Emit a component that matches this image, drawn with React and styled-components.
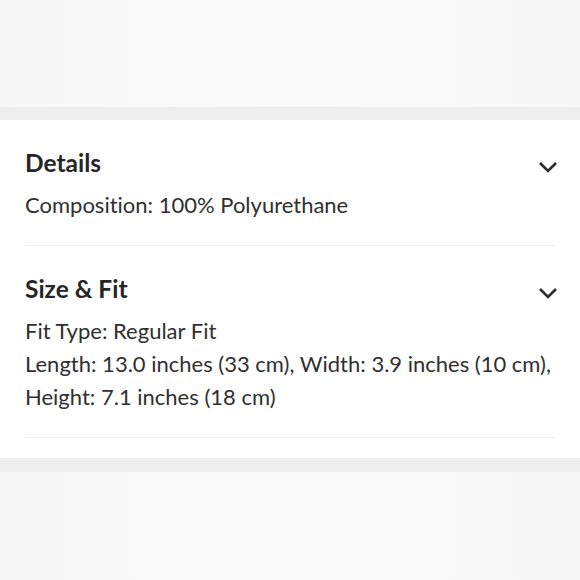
import React from 'react'
import styled, { createGlobalStyle } from 'styled-components'

const GlobalStyle = createGlobalStyle`
  html, body {
    margin: 0;
    padding: 0;
    background: #f8f8f8;
    font-family: Lato, "Open Sans", sans-serif;
    font-variant-ligatures: none;
  }
`;

const Chevron = () => (
  <svg width="20" height="12" viewBox="0 0 20 12" fill="none">
    <path d="M2 2 L10 10 L18 2" stroke="#2b2b2b" strokeWidth="2.6" strokeLinecap="butt" strokeLinejoin="miter" />
  </svg>
)

const sections = [
  { title: 'Details', lines: ['Composition: 100% Polyurethane'] },
  {
    title: 'Size & Fit',
    lines: [
      'Fit Type: Regular Fit',
      'Length: 13.0 inches (33 cm), Width: 3.9 inches (10 cm),',
      'Height: 7.1 inches (18 cm)',
    ],
  },
]

const App = () => {
  return (
    <Page>
      <GlobalStyle />
      <Backdrop />
      <Band />
      <Card>
        {sections.map((s) => (
          <Section key={s.title}>
            <Header>
              <Title>{s.title}</Title>
              <Toggle><Chevron /></Toggle>
            </Header>
            <Body>
              {s.lines.map((l) => <div key={l}>{l}</div>)}
            </Body>
          </Section>
        ))}
      </Card>
      <Band $h={14} />
      <Backdrop $grow />
    </Page>
  )
}

const Page = styled.div`
  display: flex;
  flex-direction: column;
  width: 580px;
  height: 580px;
  overflow: hidden;
`;

const Backdrop = styled.div`
  height: 107px;
  flex: ${(p) => (p.$grow ? 1 : 'none')};
  background: linear-gradient(90deg, #f7f7f7, #fafafa 50%, #f7f7f7);
`;

const Band = styled.div`
  height: ${(p) => p.$h || 13}px;
  flex: none;
  background: #eeeeee;
`;

const Card = styled.div`
  background: #fff;
  padding: 0 25px 20px;
`;

const Section = styled.div`
  padding: 28px 0 24px;
  border-bottom: 1px solid #ececec;
`;

const Header = styled.div`
  display: flex;
  align-items: center;
  justify-content: space-between;
  height: 29px;
  margin-bottom: 11px;
`;

const Title = styled.h2`
  margin: 0;
  font-size: 24.5px;
  font-weight: 700;
  color: #262626;
`;

const Toggle = styled.span`
  display: flex;
  margin: 8px -3px 0 0;
`;

const Body = styled.div`
  font-size: 22px;
  line-height: 33px;
  color: #303030;
  white-space: nowrap;
`;

export default App
